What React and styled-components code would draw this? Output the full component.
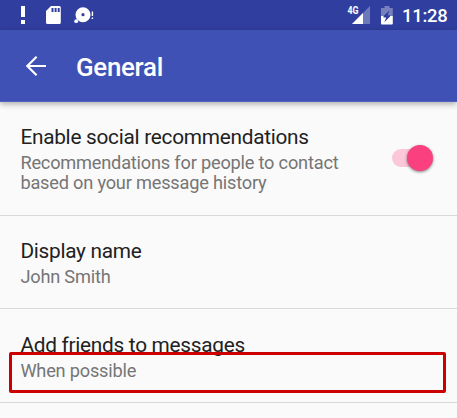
import React from "react";
import styled, { createGlobalStyle } from "styled-components";

const Global = createGlobalStyle`
  * { box-sizing: border-box; }
  body { margin: 0; background: #fafafa; font-family: Roboto, sans-serif; overflow: hidden; }
`;

const Screen = styled.main`
  width: 457px;
  height: 418px;
  display: flex;
  flex-direction: column;
  background: #fafafa;
  overflow: hidden;
`;

const StatusBar = styled.div`
  flex: none;
  height: 30px;
  display: flex;
  align-items: flex-start;
  justify-content: space-between;
  padding-right: 10px;
  background: #303f9f;
  color: #fff;
`;

const StatusIcons = styled.svg`
  display: block;
  flex: none;
  width: ${(p) => p.$width}px;
  height: 30px;
`;

const StatusRight = styled.div`
  display: flex;
`;

const Clock = styled.span`
  width: 45px;
  font-size: 18.4px;
  font-weight: 500;
  line-height: 31px;
  letter-spacing: -0.25px;
  white-space: nowrap;
`;

const AppBar = styled.header`
  flex: none;
  height: 72px;
  display: flex;
  align-items: center;
  padding: 1px 0 0 24px;
  background: #3f51b5;
  border-bottom: 1px solid #5262bc;
  color: #fff;
  box-shadow: 0 2px 6px rgba(0, 0, 0, 0.32);
  z-index: 1;
`;

const BackIcon = styled.svg`
  display: block;
  width: 24px;
  height: 24px;
`;

const Title = styled.h1`
  margin: 2px 0 0 28px;
  font-size: 25.9px;
  font-weight: 500;
  line-height: 32px;
  letter-spacing: -0.3px;
`;

const Preference = styled.section`
  position: relative;
  flex: none;
  height: ${(p) => p.$height}px;
  display: flex;
  justify-content: space-between;
  padding: ${(p) => p.$top}px 24px 0 20.4px;
  border-bottom: 1px solid #d9d9d9;
`;

const Label = styled.div`
  font-size: 20.8px;
  line-height: 26px;
  letter-spacing: -0.27px;
  color: #212121;
  white-space: nowrap;
`;

const Summary = styled.div`
  margin-top: 3px;
  font-size: 18.2px;
  line-height: 20.4px;
  letter-spacing: -0.2px;
  color: #757575;
  white-space: nowrap;
`;

const Toggle = styled.div`
  width: 41px;
  height: 26px;
  margin-top: 21px;
  display: flex;
  align-items: center;
`;

const Track = styled.div`
  width: 36px;
  height: 18px;
  border-radius: 9px;
  background: #fcc8d9;
`;

const Thumb = styled.div`
  flex: none;
  width: 26px;
  height: 26px;
  margin-left: -21px;
  border-radius: 50%;
  background: #fb4080;
  box-shadow: 0 1px 3px rgba(0, 0, 0, 0.5);
`;

const Highlight = styled.div`
  position: absolute;
  left: 9px;
  top: 43px;
  width: 437px;
  height: 41px;
  border: 3px solid #cc0000;
  border-radius: 2px;
`;

export default function App() {
  return (
    <>
      <Global />
      <Screen>
        <StatusBar>
          <StatusIcons $width={110} viewBox="0 0 110 30" fill="#fff">
            <path d="M21 6h4v11h-4zM21 20h4v4h-4z" />
            <path fillRule="evenodd" d="M51 6h8.2a1.6 1.6 0 0 1 1.6 1.6v14.8a1.6 1.6 0 0 1-1.6 1.6H47.6a1.6 1.6 0 0 1-1.6-1.6V11zM51.5 8v4h2V8zM54.6 8v4h2V8zM57.7 8v4h2V8z" />
            <path fillRule="evenodd" d="M83 7.2a7.5 7.5 0 1 0 0 15a7.5 7.5 0 0 0 0-15zM83 13.1a1.6 1.6 0 1 1 0 3.2a1.6 1.6 0 0 1 0-3.2z" />
            <circle cx="76.2" cy="21.2" r="1.9" />
            <path d="M91.7 11.5h1.4v4.5h-1.4zM91.7 17.5h1.4v1.4h-1.4z" />
          </StatusIcons>
          <StatusRight>
            <StatusIcons $width={55} viewBox="347 0 55 30" fill="#fff">
              <path opacity=".3" d="M370 6v18h-18z" />
              <path fill="#303f9f" d="M347 5h11.7v10H347z" />
              <path d="M363 13v11h-11z" />
              <text x="347.5" y="14.2" fontFamily="Roboto" fontSize="10.8" fontWeight="700" textLength="11" lengthAdjust="spacingAndGlyphs">4G</text>
              <path fill="#7680bd" d="M384.5 6h5v2h3.3v8.5H381V8h3.5z" />
              <path d="M381 16h11.8v7.5a1 1 0 0 1-1 1H382a1 1 0 0 1-1-1z" />
              <path fill="#303f9f" d="M389.5 10.5l-6 5.6v1.3h2.7l-1.9 4.8 5.8-5.7v-1.2h-2.5z" />
            </StatusIcons>
            <Clock>11:28</Clock>
          </StatusRight>
        </StatusBar>
        <AppBar>
          <BackIcon viewBox="24 54 24 24" fill="none" stroke="#fff" strokeWidth="2.2">
            <path d="M46 66H27.5M36.6 56.7L27.3 66l9.3 9.3" />
          </BackIcon>
          <Title>General</Title>
        </AppBar>
        <Preference $height={114} $top={22}>
          <div>
            <Label>Enable social recommendations</Label>
            <Summary>Recommendations for people to contact<br />based on your message history</Summary>
          </div>
          <Toggle><Track /><Thumb /></Toggle>
        </Preference>
        <Preference $height={93} $top={22}>
          <div>
            <Label>Display name</Label>
            <Summary>John Smith</Summary>
          </div>
        </Preference>
        <Preference $height={94} $top={23}>
          <div>
            <Label>Add friends to messages</Label>
            <Summary>When possible</Summary>
          </div>
          <Highlight />
        </Preference>
      </Screen>
    </>
  );
}
